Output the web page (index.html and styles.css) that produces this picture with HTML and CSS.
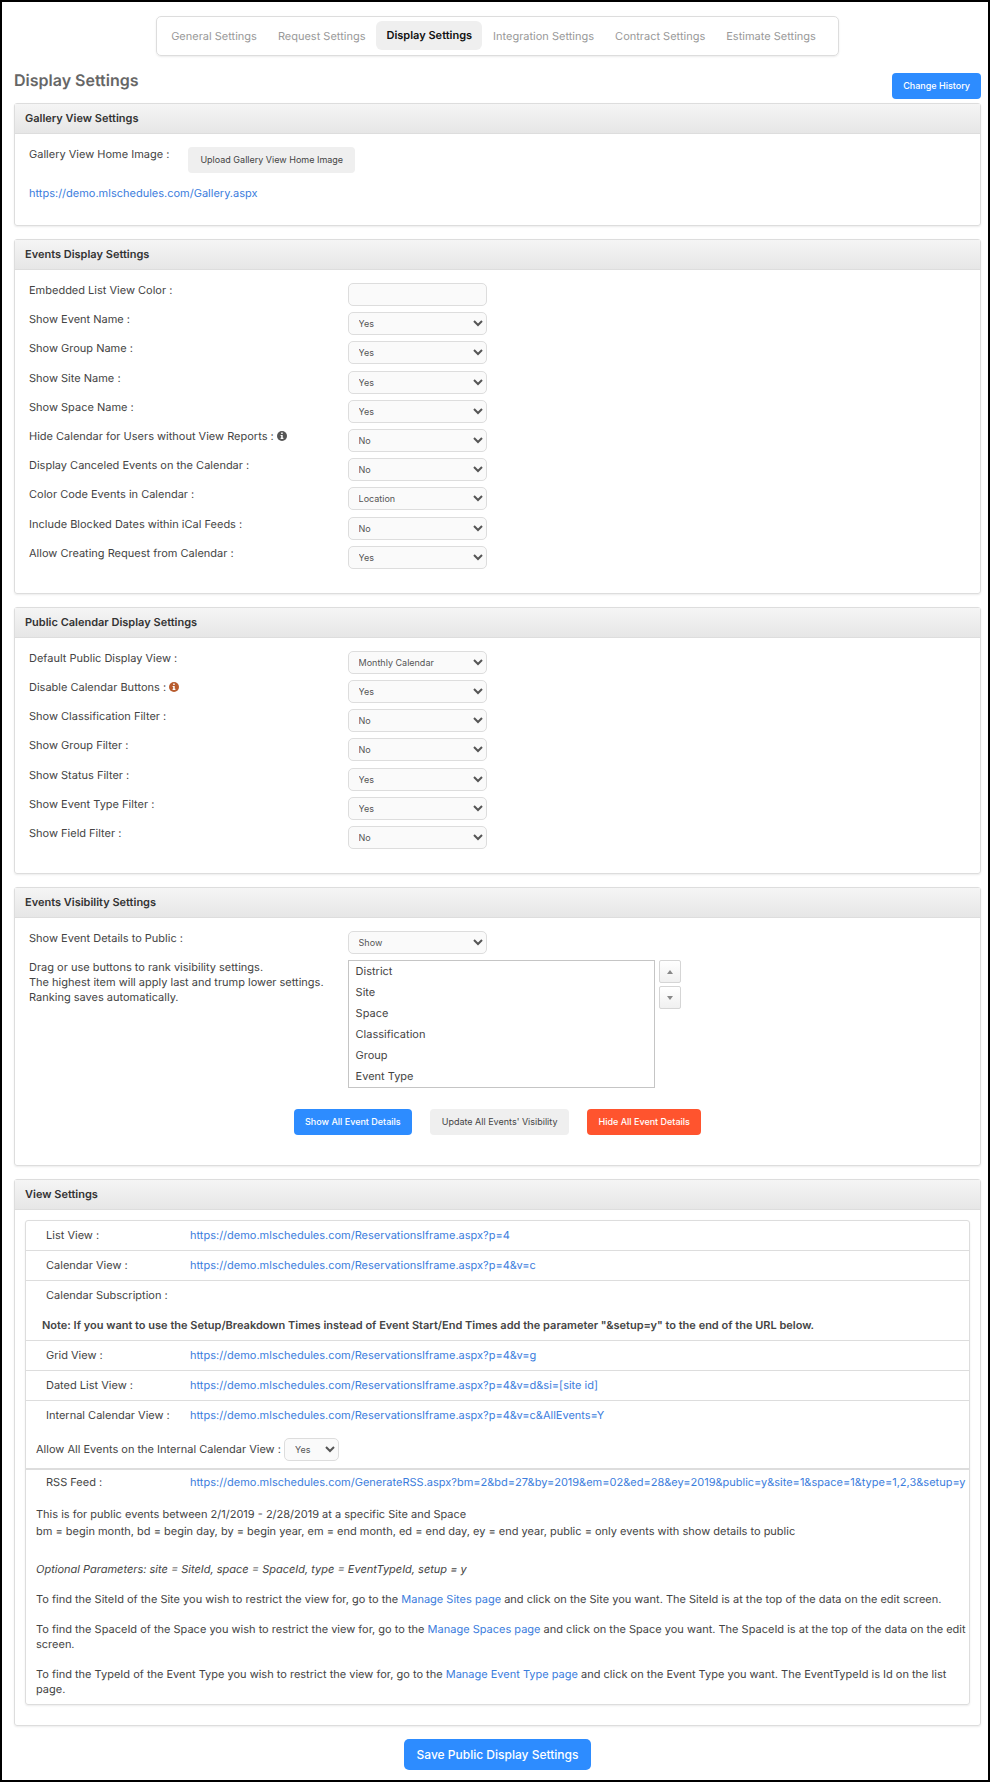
FILE: index.html
```html
<!DOCTYPE html>
<html lang="en">
<head>
<meta charset="UTF-8">
<meta name="viewport" content="width=device-width, initial-scale=1.0">
<title>Display Settings</title>
<link rel="stylesheet" href="styles.css">
</head>
<body>
    <nav class="tabs">
        <a href="#">General Settings</a>
        <a href="#">Request Settings</a>
        <a href="#" class="active">Display Settings</a>
        <a href="#">Integration Settings</a>
        <a href="#">Contract Settings</a>
        <a href="#">Estimate Settings</a>
    </nav>
    <header class="page-header">
        <h1>Display Settings</h1>
        <button type="button" class="btn btn-blue">Change History</button>
    </header>
    <form>
        <section class="panel">
            <h2>Gallery View Settings</h2>
            <div class="panel-body">
                <div class="upload-row">
                    <label for="galleryImage">Gallery View Home Image :</label>
                    <button type="button" id="galleryImage" class="btn">Upload Gallery View Home Image</button>
                </div>
                <a href="#">https://demo.mlschedules.com/Gallery.aspx</a>
            </div>
        </section>

        <section class="panel">
            <h2>Events Display Settings</h2>
            <div class="panel-body">
                <div class="fields fields-events">
                    <div class="field">
                        <label for="listColor">Embedded List View Color :</label>
                        <input type="text" id="listColor" name="listColor">
                    </div>
                    <div class="field">
                        <label for="eventName">Show Event Name :</label>
                        <select id="eventName" name="eventName"><option>Yes</option><option>No</option></select>
                    </div>
                    <div class="field">
                        <label for="groupName">Show Group Name :</label>
                        <select id="groupName" name="groupName"><option>Yes</option><option>No</option></select>
                    </div>
                    <div class="field">
                        <label for="siteName">Show Site Name :</label>
                        <select id="siteName" name="siteName"><option>Yes</option><option>No</option></select>
                    </div>
                    <div class="field">
                        <label for="spaceName">Show Space Name :</label>
                        <select id="spaceName" name="spaceName"><option>Yes</option><option>No</option></select>
                    </div>
                    <div class="field">
                        <label for="hideCalendar">Hide Calendar for Users without View Reports :
                            <svg class="info" viewBox="0 0 10 10"><circle cx="5" cy="5" r="5"/><path d="M4.2 1.6h1.5v1.3H4.2zM3.6 3.9h2.1v2.9h.7v1.1H3.6V6.8h.6V5h-.6z" fill="#fff"/></svg>
                        </label>
                        <select id="hideCalendar" name="hideCalendar"><option>No</option><option>Yes</option></select>
                    </div>
                    <div class="field">
                        <label for="canceledEvents">Display Canceled Events on the Calendar :</label>
                        <select id="canceledEvents" name="canceledEvents"><option>No</option><option>Yes</option></select>
                    </div>
                    <div class="field">
                        <label for="colorCode">Color Code Events in Calendar :</label>
                        <select id="colorCode" name="colorCode"><option>Location</option></select>
                    </div>
                    <div class="field">
                        <label for="blockedDates">Include Blocked Dates within iCal Feeds :</label>
                        <select id="blockedDates" name="blockedDates"><option>No</option><option>Yes</option></select>
                    </div>
                    <div class="field">
                        <label for="allowRequest">Allow Creating Request from Calendar :</label>
                        <select id="allowRequest" name="allowRequest"><option>Yes</option><option>No</option></select>
                    </div>
                </div>
            </div>
        </section>

        <section class="panel">
            <h2>Public Calendar Display Settings</h2>
            <div class="panel-body">
                <div class="fields fields-calendar">
                    <div class="field">
                        <label for="defaultView">Default Public Display View :</label>
                        <select id="defaultView" name="defaultView"><option>Monthly Calendar</option></select>
                    </div>
                    <div class="field">
                        <label for="disableButtons">Disable Calendar Buttons :
                            <svg class="info info-warn" viewBox="0 0 10 10"><circle cx="5" cy="5" r="5"/><path d="M4.2 1.6h1.5v1.3H4.2zM3.6 3.9h2.1v2.9h.7v1.1H3.6V6.8h.6V5h-.6z" fill="#fff"/></svg>
                        </label>
                        <select id="disableButtons" name="disableButtons"><option>Yes</option><option>No</option></select>
                    </div>
                    <div class="field">
                        <label for="classFilter">Show Classification Filter :</label>
                        <select id="classFilter" name="classFilter"><option>No</option><option>Yes</option></select>
                    </div>
                    <div class="field">
                        <label for="groupFilter">Show Group Filter :</label>
                        <select id="groupFilter" name="groupFilter"><option>No</option><option>Yes</option></select>
                    </div>
                    <div class="field">
                        <label for="statusFilter">Show Status Filter :</label>
                        <select id="statusFilter" name="statusFilter"><option>Yes</option><option>No</option></select>
                    </div>
                    <div class="field">
                        <label for="typeFilter">Show Event Type Filter :</label>
                        <select id="typeFilter" name="typeFilter"><option>Yes</option><option>No</option></select>
                    </div>
                    <div class="field">
                        <label for="fieldFilter">Show Field Filter :</label>
                        <select id="fieldFilter" name="fieldFilter"><option>No</option><option>Yes</option></select>
                    </div>
                </div>
            </div>
        </section>

        <section class="panel">
            <h2>Events Visibility Settings</h2>
            <div class="panel-body">
                <div class="field field-details">
                    <label for="showDetails">Show Event Details to Public :</label>
                    <select id="showDetails" name="showDetails"><option>Show</option><option>Hide</option></select>
                </div>
                <div class="field">
                    <p class="rank-help">Drag or use buttons to rank visibility settings.<br>The highest item will apply last and trump lower settings.<br>Ranking saves automatically.</p>
                    <div class="rank">
                        <ul class="rank-list">
                            <li draggable="true">District</li>
                            <li draggable="true">Site</li>
                            <li draggable="true">Space</li>
                            <li draggable="true">Classification</li>
                            <li draggable="true">Group</li>
                            <li draggable="true">Event Type</li>
                        </ul>
                        <div class="rank-buttons">
                            <button type="button" aria-label="Move up"><svg viewBox="0 0 6 4"><path d="M3 0l3 4H0z"/></svg></button>
                            <button type="button" aria-label="Move down"><svg viewBox="0 0 6 4"><path d="M0 0h6L3 4z"/></svg></button>
                        </div>
                    </div>
                </div>
                <div class="actions">
                    <button type="button" class="btn btn-blue">Show All Event Details</button>
                    <button type="button" class="btn">Update All Events' Visibility</button>
                    <button type="button" class="btn btn-red">Hide All Event Details</button>
                </div>
            </div>
        </section>

        <section class="panel">
            <h2>View Settings</h2>
            <div class="views-wrap">
                <table class="views">
                    <tr>
                        <th>List View :</th>
                        <td><a href="#">https://demo.mlschedules.com/ReservationsIframe.aspx?p=4</a></td>
                    </tr>
                    <tr class="line">
                        <th>Calendar View :</th>
                        <td><a href="#">https://demo.mlschedules.com/ReservationsIframe.aspx?p=4&amp;v=c</a></td>
                    </tr>
                    <tr class="line">
                        <th colspan="2">Calendar Subscription :</th>
                    </tr>
                    <tr>
                        <td colspan="2" class="note">Note: If you want to use the Setup/Breakdown Times instead of Event Start/End Times add the parameter "&amp;setup=y" to the end of the URL below.</td>
                    </tr>
                    <tr class="line">
                        <th>Grid View :</th>
                        <td><a href="#">https://demo.mlschedules.com/ReservationsIframe.aspx?p=4&amp;v=g</a></td>
                    </tr>
                    <tr class="line">
                        <th>Dated List View :</th>
                        <td><a href="#">https://demo.mlschedules.com/ReservationsIframe.aspx?p=4&amp;v=d&amp;si=[site id]</a></td>
                    </tr>
                    <tr class="line">
                        <th>Internal Calendar View :</th>
                        <td><a href="#">https://demo.mlschedules.com/ReservationsIframe.aspx?p=4&amp;v=c&amp;AllEvents=Y</a></td>
                    </tr>
                    <tr>
                        <td colspan="2" class="allow">
                            <label for="allowAll">Allow All Events on the Internal Calendar View :</label>
                            <select id="allowAll" name="allowAll"><option>Yes</option><option>No</option></select>
                        </td>
                    </tr>
                    <tr class="line line-thick">
                        <th>RSS Feed :</th>
                        <td><a href="#">https://demo.mlschedules.com/GenerateRSS.aspx?bm=2&amp;bd=27&amp;by=2019&amp;em=02&amp;ed=28&amp;ey=2019&amp;public=y&amp;site=1&amp;space=1&amp;type=1,2,3&amp;setup=y</a></td>
                    </tr>
                    <tr>
                        <td colspan="2" class="help">
                            <p class="rss-legend">This is for public events between 2/1/2019 - 2/28/2019 at a specific Site and Space<br>bm = begin month, bd = begin day, by = begin year, em = end month, ed = end day, ey = end year, public = only events with show details to public</p>
                            <p><em>Optional Parameters: site = SiteId, space = SpaceId, type = EventTypeId, setup = y</em></p>
                            <p>To find the SiteId of the Site you wish to restrict the view for, go to the <a href="#">Manage Sites page</a> and click on the Site you want. The SiteId is at the top of the data on the edit screen.</p>
                            <p>To find the SpaceId of the Space you wish to restrict the view for, go to the <a href="#">Manage Spaces page</a> and click on the Space you want. The SpaceId is at the top of the data on the edit screen.</p>
                            <p>To find the TypeId of the Event Type you wish to restrict the view for, go to the <a href="#">Manage Event Type page</a> and click on the Event Type you want. The EventTypeId is Id on the list page.</p>
                        </td>
                    </tr>
                </table>
            </div>
        </section>

        <div class="save">
            <button type="submit" class="btn btn-blue btn-save">Save Public Display Settings</button>
        </div>
    </form>
</body>
</html>
```
FILE: styles.css
```css
* {
    box-sizing: border-box;
}
body {
    margin: 0;
    padding: 14px 7px 10px 12px;
    border: 2px solid #000;
    background-color: #fff;
    color: #444;
    font: 11px/15px Inter, sans-serif;
    text-rendering: geometricPrecision;
}
h1, h2, p, ul {
    margin: 0;
    padding: 0;
}
a {
    color: #3b7ddd;
    text-decoration: none;
}

/* tabs */
.tabs {
    display: flex;
    gap: 1px;
    width: fit-content;
    margin: 0 auto;
    padding: 4px 12px 5px 4px;
    border: 1px solid #ddd;
    border-radius: 5px;
    box-shadow: 0 1px 2px rgba(0, 0, 0, 0.08);
}
.tabs a {
    padding: 8px 10px 6px;
    border-radius: 6px;
    color: #999;
}
.tabs a.active {
    padding: 7px 10px;
    background-color: #efefef;
    color: #111;
    font-weight: 600;
}

.page-header {
    display: flex;
    justify-content: space-between;
    align-items: flex-end;
    margin: 15px 0 4px;
}
h1 {
    padding-bottom: 10px;
    font-size: 16px;
    line-height: 18px;
    font-weight: 600;
    color: #666;
}

/* buttons */
.btn {
    height: 26px;
    padding: 0 12px;
    border: none;
    border-radius: 4px;
    background-color: #efefef;
    color: #444;
    font: 9px/14px Inter, sans-serif;
    cursor: pointer;
}
.btn-blue,
.btn-red {
    padding: 0 11px;
    background-color: #2d8cff;
    color: #fff;
    font-weight: 500;
}
.btn-red {
    background-color: #ff542e;
}

/* panels */
.panel {
    margin-bottom: 13px;
    border: 1px solid #ddd;
    border-radius: 3px;
    box-shadow: 0 1px 2px rgba(0, 0, 0, 0.08);
}
.panel h2 {
    padding: 7px 10px;
    border-bottom: 1px solid #ddd;
    background: linear-gradient(#f5f5f5, #e6e6e6);
    color: #333;
    font-size: 11px;
    line-height: 15px;
    font-weight: 600;
}
.panel-body {
    padding: 13px 14px 24px;
}
.upload-row {
    display: flex;
    gap: 19px;
    margin-bottom: 13px;
}

/* label on the left, control on the right */
.fields {
    display: grid;
    grid-auto-rows: 1fr;
    row-gap: 6px;
}
.fields-events {
    min-height: 286px;
}
.fields-calendar {
    min-height: 198px;
}
.field {
    display: grid;
    grid-template-columns: 34% 1fr;
    align-items: start;
}
.field-details {
    margin-bottom: 6px;
}
input[type="text"],
select {
    width: 139px;
    height: 23px;
    padding: 0 6px;
    border: 1px solid #ddd;
    border-radius: 5px;
    background-color: #fafafa;
    color: #555;
    font: 9px/14px Inter, sans-serif;
}
.info {
    width: 10px;
    height: 10px;
    vertical-align: -1px;
    fill: #555;
}
.info-warn {
    fill: #b85c2e;
}

/* ranking */
.rank {
    display: flex;
    gap: 4px;
}
.rank-list {
    width: 307px;
    border: 1px solid #c5c5c5;
    list-style: none;
}
.rank-list li {
    padding: 3px 7px;
}
.rank-buttons {
    display: flex;
    flex-direction: column;
    gap: 3px;
}
.rank-buttons button {
    display: flex;
    align-items: center;
    justify-content: center;
    width: 22px;
    height: 23px;
    padding: 0;
    border: 1px solid #d5d5d5;
    border-radius: 2px;
    background: linear-gradient(#fff, #f0f0f0);
}
.rank-buttons svg {
    width: 6px;
    height: 4px;
    fill: #888;
}
.actions {
    display: flex;
    justify-content: center;
    gap: 18px;
    margin: 21px 0 6px;
}

/* view links */
.views-wrap {
    margin: 10px 10px 20px;
    border: 1px solid #ddd;
    border-radius: 3px;
    box-shadow: 0 1px 2px rgba(0, 0, 0, 0.08);
}
.views {
    width: 100%;
    border-collapse: collapse;
}
.views th,
.views td {
    padding: 7px 0;
    font-weight: normal;
    text-align: left;
}
.views th {
    width: 164px;
    padding-left: 20px;
}
.views .line {
    border-top: 1px solid #ddd;
}
.views .line-thick {
    border-top-width: 2px;
}
.views .line-thick th,
.views .line-thick td {
    padding-top: 5px;
}
.views .note {
    padding: 8px 16px 7px;
    font-weight: 600;
}
.views .allow {
    padding: 8px 10px 7px;
}
.allow select {
    width: 55px;
}
.views .help {
    padding: 9px 0 7px 10px;
}
.help p {
    margin-bottom: 15px;
}
.help p:last-child {
    margin-bottom: 0;
}
.help .rss-legend {
    margin-bottom: 22px;
    line-height: 17px;
}

.save {
    text-align: center;
}
.btn-save {
    height: 31px;
    padding: 0 13px;
    border-radius: 5px;
    font-size: 12px;
}
```
